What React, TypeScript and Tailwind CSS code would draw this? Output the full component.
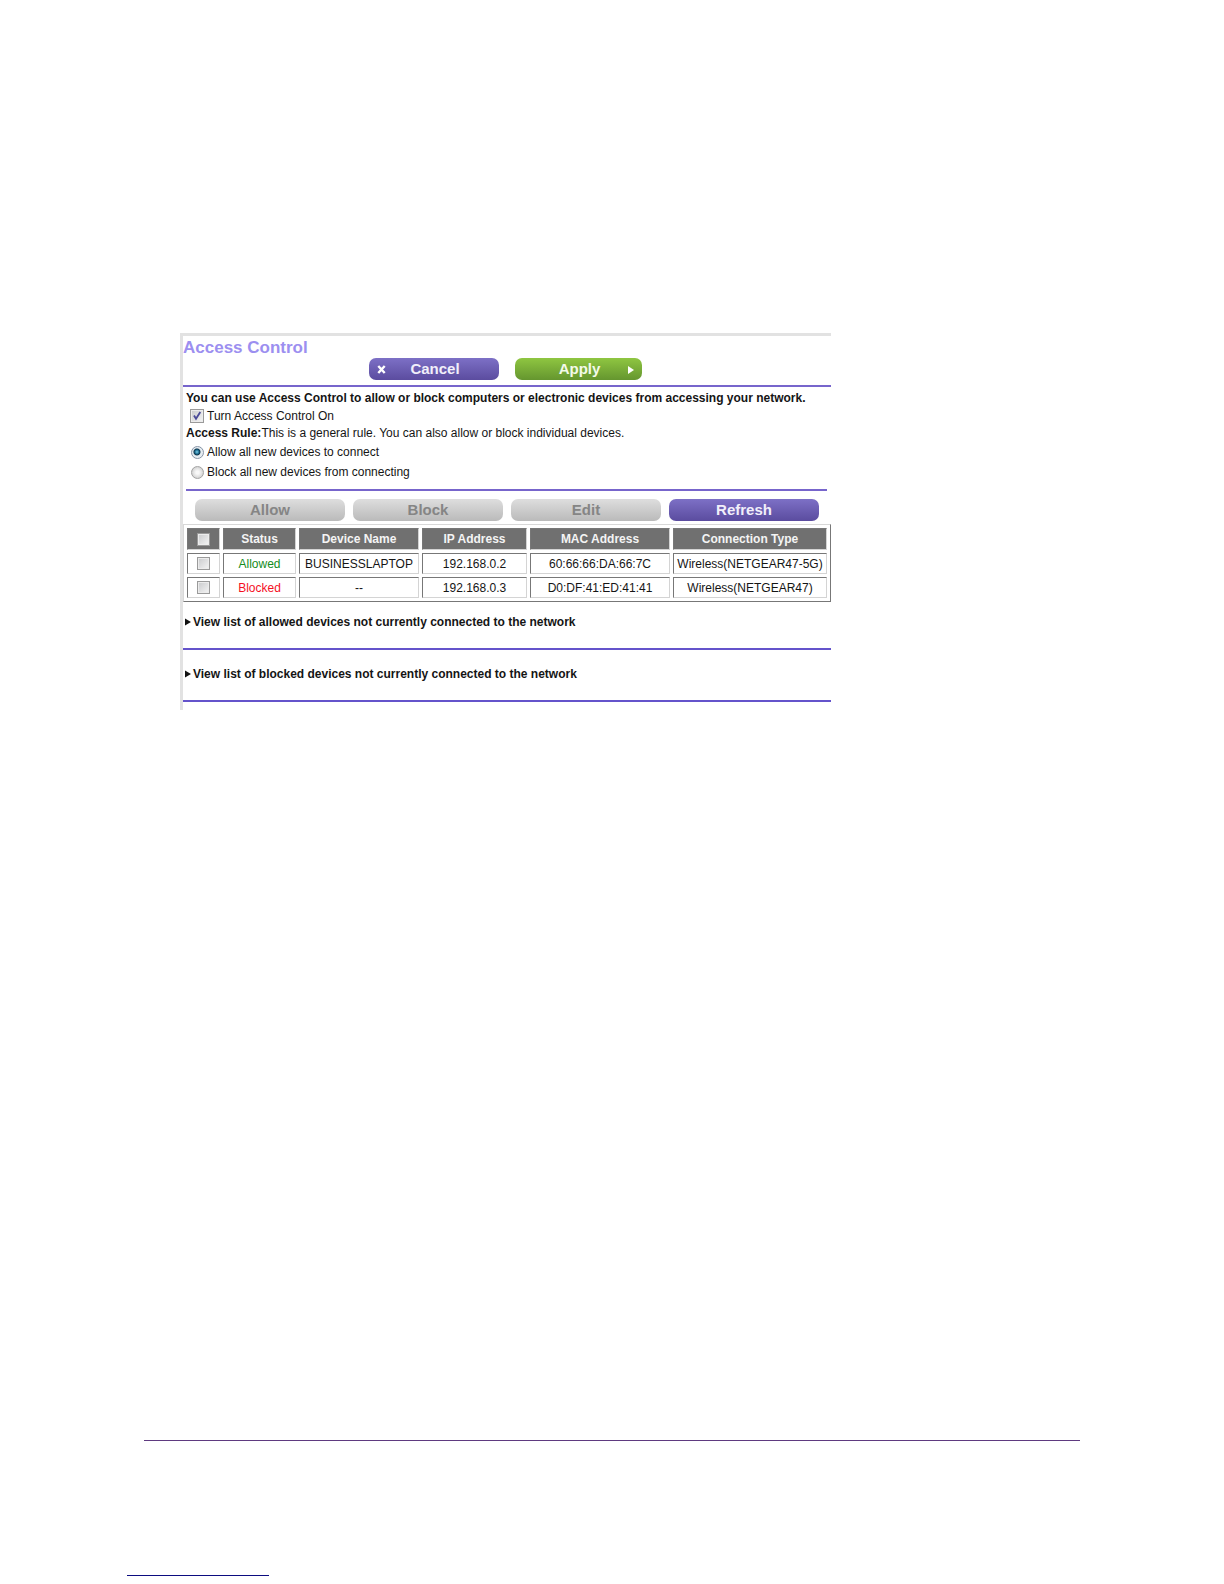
import React, { useState } from "react";

type Device = {
  status: "Allowed" | "Blocked";
  name: string;
  ip: string;
  mac: string;
  connection: string;
};

const devices: Device[] = [
  { status: "Allowed", name: "BUSINESSLAPTOP", ip: "192.168.0.2", mac: "60:66:66:DA:66:7C", connection: "Wireless(NETGEAR47-5G)" },
  { status: "Blocked", name: "--", ip: "192.168.0.3", mac: "D0:DF:41:ED:41:41", connection: "Wireless(NETGEAR47)" },
];

const columns = [
  { label: "Status", width: "w-[73px]" },
  { label: "Device Name", width: "w-[120px]" },
  { label: "IP Address", width: "w-[105px]" },
  { label: "MAC Address", width: "w-[140px]" },
  { label: "Connection Type", width: "" },
];

const buttonBase = "flex h-[22px] items-center justify-center rounded-[7px] pb-[2px] text-[15px] font-bold leading-none";
const purple = "bg-linear-to-b from-[#7d70c6] to-[#5b4c9f] text-[#f1effa]";
const grey = "bg-linear-to-b from-[#dedede] to-[#bababa] text-[#858585]";
const cell = "border border-t-[#777] border-l-[#777] border-r-[#d4d4d4] border-b-[#d4d4d4] p-0 text-center leading-none whitespace-nowrap";
const headCell = "bg-[#707070] text-[#f4f4f4]";
const box = "block appearance-none border border-[#9a9a9a] bg-linear-to-br from-[#c9cacc] to-[#f5f5f5] ring-1 ring-inset ring-[#ececec]";

function RowCheckbox({ label }: { label: string }) {
  return <input type="checkbox" aria-label={label} className={`${box} mx-auto size-[13px]`} />;
}

function Rule({ value, label, checked, onSelect }: { value: string; label: string; checked: boolean; onSelect: () => void }) {
  return (
    <label className="flex h-5 items-center gap-[3px]">
      <input
        type="radio"
        name="rule"
        value={value}
        checked={checked}
        onChange={onSelect}
        className="size-[13px] appearance-none rounded-full border border-[#a3a3a3] bg-[radial-gradient(circle,#f8f8f8_20%,#d2d2d2_75%)] checked:border-[#8794a6] checked:bg-[radial-gradient(circle_at_45%_45%,#7fd0e8_0px,#1b6d92_2px,#12384f_3px,#e6edf2_4px)]"
      />
      <span>{label}</span>
    </label>
  );
}

function ViewList({ label }: { label: string }) {
  return (
    <div className="flex items-center border-b-2 border-[#6453cb] pb-[18px]">
      <button type="button" className="flex items-center gap-[2px] pl-[2px] font-bold">
        <svg width="6" height="8" viewBox="0 0 6 8" aria-hidden="true">
          <path d="M0 0.5 L6 4 L0 7.5 Z" fill="#111" />
        </svg>
        {label}
      </button>
    </div>
  );
}

export default function App() {
  const [enabled, setEnabled] = useState(true);
  const [rule, setRule] = useState("allow");

  return (
    <div className="flex min-h-screen flex-col bg-white font-['Liberation_Sans',Arial,sans-serif] text-[12px] leading-4 text-[#151515]">
      <main className="mr-6 ml-[180px] mt-[333px] max-w-[651px] border-t-3 border-l-3 border-[#e2e2e2] pb-2">
        <h1 className="h-[22px] pt-[2px] text-[17px] leading-5 font-bold text-[#9c8ff0]">Access Control</h1>
        <div className="flex h-[29px] justify-center gap-4 border-b-2 border-[#7765cc] pr-1 pb-1">
          <button type="button" className={`${buttonBase} ${purple} relative w-[130px] pl-[3px]`}>
            <svg className="absolute left-2 top-[7px]" width="9" height="9" viewBox="0 0 9 9" aria-hidden="true">
              <path d="M1.3 1 L7.7 8 M7.7 1 L1.3 8" stroke="#fff" strokeWidth="2.4" />
            </svg>
            Cancel
          </button>
          <button type="button" className={`${buttonBase} relative w-[127px] bg-linear-to-b from-[#8fc641] to-[#65962f] pl-[3px] text-[#f3faea]`}>
            Apply
            <svg className="absolute right-2 top-2" width="6" height="8" viewBox="0 0 6 8" aria-hidden="true">
              <path d="M0 0 L6 4 L0 8 Z" fill="#fff" />
            </svg>
          </button>
        </div>

        <section className="mr-1 ml-[3px] border-b-2 border-[#7765cc] pt-[2px] pb-[7px]">
          <p className="h-[18px] leading-[18px] font-bold">
            You can use Access Control to allow or block computers or electronic devices from accessing your network.
          </p>
          <label className="mb-px flex h-[18px] items-center gap-[3px] pl-1">
            <span className="relative block size-[14px]">
              <input
                type="checkbox"
                checked={enabled}
                onChange={(e) => setEnabled(e.target.checked)}
                className={`${box} size-[14px]`}
              />
              {enabled && (
                <svg className="pointer-events-none absolute inset-0" width="14" height="14" viewBox="0 0 14 14" aria-hidden="true">
                  <path d="M4 6.5 L6 9.8 L10.3 3" fill="none" stroke="#4a4a98" strokeWidth="1.8" />
                </svg>
              )}
            </span>
            <span>Turn Access Control On</span>
          </label>
          <p className="mb-[2px] h-[14px] leading-[14px]">
            <b>Access Rule:</b>This is a general rule. You can also allow or block individual devices.
          </p>
          <div className="pl-[5px]">
            <Rule value="allow" label="Allow all new devices to connect" checked={rule === "allow"} onSelect={() => setRule("allow")} />
            <Rule value="block" label="Block all new devices from connecting" checked={rule === "block"} onSelect={() => setRule("block")} />
          </div>
        </section>

        <div className="mt-2 mb-[3px] flex justify-between px-3">
          <button type="button" className={`${buttonBase} ${grey} w-[150px]`}>Allow</button>
          <button type="button" className={`${buttonBase} ${grey} w-[150px]`}>Block</button>
          <button type="button" className={`${buttonBase} ${grey} w-[150px]`}>Edit</button>
          <button type="button" className={`${buttonBase} ${purple} w-[150px]`}>Refresh</button>
        </div>

        <table className="w-full table-fixed border-separate border-spacing-[3px] border border-t-[#d8d8d8] border-r-[#777] border-b-[#777] border-l-[#d8d8d8]">
          <thead>
            <tr className="h-[22px]">
              <th scope="col" className={`${cell} ${headCell} w-[33px]`}>
                <RowCheckbox label="Select all devices" />
              </th>
              {columns.map((c) => (
                <th key={c.label} scope="col" className={`${cell} ${headCell} ${c.width} font-bold`}>{c.label}</th>
              ))}
            </tr>
          </thead>
          <tbody>
            {devices.map((d) => (
              <tr key={d.ip} className="h-[21px]">
                <td className={cell}>
                  <RowCheckbox label={`Select ${d.ip}`} />
                </td>
                <td className={`${cell} ${d.status === "Allowed" ? "text-[#148c1c]" : "text-[#f5101f]"}`}>{d.status}</td>
                <td className={cell}>{d.name}</td>
                <td className={cell}>{d.ip}</td>
                <td className={cell}>{d.mac}</td>
                <td className={cell}>{d.connection}</td>
              </tr>
            ))}
          </tbody>
        </table>

        <div className="flex flex-col gap-4 pt-3">
          <ViewList label="View list of allowed devices not currently connected to the network" />
          <ViewList label="View list of blocked devices not currently connected to the network" />
        </div>
      </main>

      <footer className="mt-auto">
        <div className="mx-36 border-t border-[#5f3a80]" />
        <div className="mt-[134px] mb-2 ml-[127px] w-[142px] border-t border-[#0c0c80]" />
      </footer>
    </div>
  );
}
